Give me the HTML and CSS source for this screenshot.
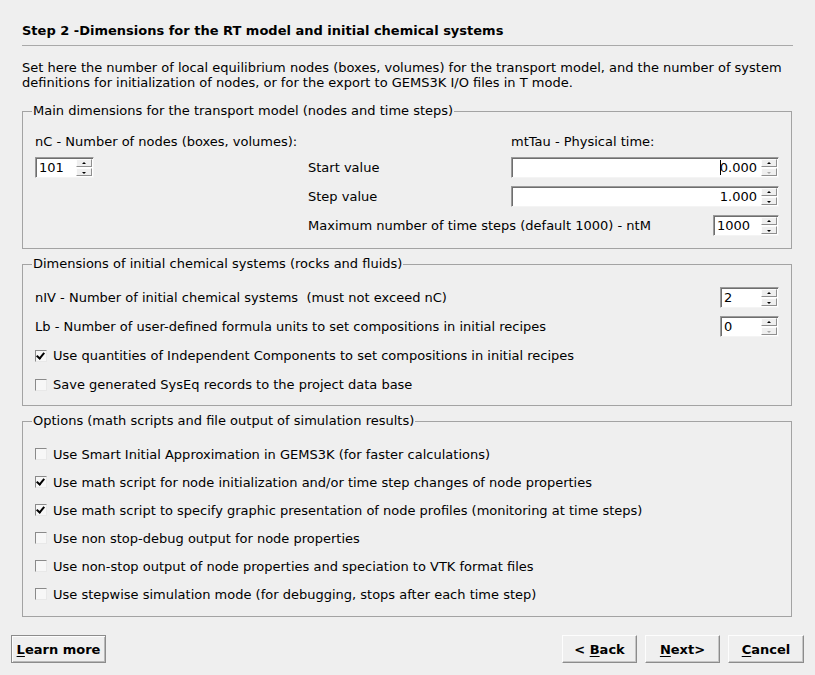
FILE: index.html
```html
<!DOCTYPE html>
<html>
<head>
<meta charset="utf-8">
<link rel="stylesheet" href="styles.css">
</head>
<body>
<div class="page">
  <div class="title">Step 2 -Dimensions for the RT model and initial chemical systems</div>
  <p class="intro">Set here the number of local equilibrium nodes (boxes, volumes) for the transport model, and the number of system<br>definitions for initialization of nodes, or for the export to GEMS3K I/O files in T mode.</p>

  <fieldset class="group g1">
    <legend>Main dimensions for the transport model (nodes and time steps)</legend>
    <div class="grid1">
      <div class="cell">nC - Number of nodes (boxes, volumes):</div>
      <div class="cell"></div>
      <div class="cell">mtTau - Physical time:</div>

      <div class="cell"><div class="spin w59"><span class="val">101</span><div class="btns"><span class="sb up"></span><span class="sb dn"></span></div></div></div>
      <div class="cell">Start value</div>
      <div class="cell"><div class="spin wide"><span class="val right"><span class="caret"></span>0.000</span><div class="btns"><span class="sb up"></span><span class="sb dn off"></span></div></div></div>

      <div class="cell"></div>
      <div class="cell">Step value</div>
      <div class="cell"><div class="spin wide"><span class="val right">1.000</span><div class="btns"><span class="sb up"></span><span class="sb dn"></span></div></div></div>

      <div class="cell"></div>
      <div class="cell span2"><span>Maximum number of time steps (default 1000) - ntM</span><div class="spin w66"><span class="val">1000</span><div class="btns"><span class="sb up"></span><span class="sb dn"></span></div></div></div>
    </div>
  </fieldset>

  <fieldset class="group g2">
    <legend>Dimensions of initial chemical systems (rocks and fluids)</legend>
    <div class="row29 between"><span>nIV - Number of initial chemical systems &nbsp;(must not exceed nC)</span><div class="spin w59"><span class="val">2</span><div class="btns"><span class="sb up"></span><span class="sb dn"></span></div></div></div>
    <div class="row29 between"><span>Lb - Number of user-defined formula units to set compositions in initial recipes</span><div class="spin w59"><span class="val">0</span><div class="btns"><span class="sb up"></span><span class="sb dn off"></span></div></div></div>
    <div class="row29"><span class="cb on"></span><span>Use quantities of Independent Components to set compositions in initial recipes</span></div>
    <div class="row29"><span class="cb"></span><span>Save generated SysEq records to the project data base</span></div>
  </fieldset>

  <fieldset class="group g3">
    <legend>Options (math scripts and file output of simulation results)</legend>
    <div class="row28"><span class="cb"></span><span>Use Smart Initial Approximation in GEMS3K (for faster calculations)</span></div>
    <div class="row28"><span class="cb on"></span><span>Use math script for node initialization and/or time step changes of node properties</span></div>
    <div class="row28"><span class="cb on"></span><span>Use math script to specify graphic presentation of node profiles (monitoring at time steps)</span></div>
    <div class="row28"><span class="cb"></span><span>Use non stop-debug output for node properties</span></div>
    <div class="row28"><span class="cb"></span><span>Use non-stop output of node properties and speciation to VTK format files</span></div>
    <div class="row28"><span class="cb"></span><span>Use stepwise simulation mode (for debugging, stops after each time step)</span></div>
  </fieldset>
</div>

<div class="buttons">
  <button class="btn learn"><u>L</u>earn more</button>
  <div class="spacer"></div>
  <button class="btn">&lt; <u>B</u>ack</button>
  <button class="btn"><u>N</u>ext&gt;</button>
  <button class="btn cancel"><u>C</u>ancel</button>
</div>
</body>
</html>
```

FILE: styles.css
```css
html, body {
  margin: 0;
  padding: 0;
}
body {
  width: 815px;
  height: 675px;
  background: #efefef;
  font-family: "DejaVu Sans", "Liberation Sans", sans-serif;
  font-size: 13px;
  color: #000;
  overflow: hidden;
}
.page {
  padding: 0 23px 0 22px;
}
.title {
  font-weight: bold;
  line-height: 16px;
  padding-top: 23px;
  padding-bottom: 6px;
  border-bottom: 1px solid #a9a9a9;
  margin-right: -1px;
}
.intro {
  margin: 14px 0 0 0;
  line-height: 15px;
}
.group {
  margin: 0;
  padding: 0 12px 0 12px;
  border: 1px solid #a3a3a3;
  min-width: 0;
}
.group legend {
  padding: 0 1px;
  margin-left: -3px;
  line-height: 16px;
}
.g1 {
  margin-top: 13px;
  padding-top: 11px;
  padding-bottom: 8px;
}
.g2 {
  margin-top: 7px;
  padding-top: 11px;
  padding-bottom: 6px;
}
.g3 {
  margin-top: 7px;
  padding-top: 11px;
  padding-bottom: 8px;
}
.grid1 {
  display: grid;
  grid-template-columns: 273px 203px 1fr;
  grid-template-rows: 23px 29px 29px 29px;
}
.cell {
  display: flex;
  align-items: center;
}
.span2 {
  grid-column: 2 / 4;
  justify-content: space-between;
}
.row29 {
  height: 29px;
  display: flex;
  align-items: center;
}
.row28 {
  height: 28px;
  display: flex;
  align-items: center;
}
.between {
  justify-content: space-between;
}

/* spin boxes */
.spin {
  box-sizing: border-box;
  height: 21px;
  background: #fff;
  border-top: 1px solid #9a9a9a;
  border-left: 1px solid #9a9a9a;
  border-right: 1px solid #f4f4f4;
  border-bottom: 1px solid #f4f4f4;
  box-shadow: inset 1px 1px 0 #6e6e6e;
  display: flex;
  align-items: center;
  padding: 0 1px 0 3px;
}
.w59 { width: 59px; }
.w66 { width: 66px; }
.wide { width: 268px; }
.val {
  flex: 1;
  line-height: 15px;
  white-space: nowrap;
}
.val.right {
  text-align: right;
  padding-right: 4px;
}
.caret {
  display: inline-block;
  width: 1px;
  height: 15px;
  background: #000;
  vertical-align: -3px;
  margin-right: -1px;
}
.btns {
  display: flex;
  flex-direction: column;
  width: 16px;
  height: 17px;
  gap: 1px;
}
.sb {
  box-sizing: border-box;
  flex: 1;
  background: #efefef;
  border-top: 1px solid #fdfdfd;
  border-left: 1px solid #fdfdfd;
  border-right: 1px solid #8f8f8f;
  border-bottom: 1px solid #8f8f8f;
  position: relative;
}
.sb::after {
  content: "";
  position: absolute;
  left: 5px;
  width: 0;
  height: 0;
  border-left: 2px solid transparent;
  border-right: 2px solid transparent;
}
.sb.up::after {
  top: 2px;
  border-bottom: 2px solid #000;
}
.sb.dn::after {
  top: 3px;
  border-top: 2px solid #000;
}
.sb.off::after {
  border-top-color: #a8a8a8;
}

/* checkboxes */
.cb {
  box-sizing: border-box;
  width: 12px;
  height: 12px;
  flex: none;
  margin: 0 6px 0 0;
  background: #f7f7f7;
  border-top: 1px solid #8a8a8a;
  border-left: 1px solid #8a8a8a;
  border-right: 1px solid #e8e8e8;
  border-bottom: 1px solid #e8e8e8;
  position: relative;
}
.cb.on::after {
  content: "";
  position: absolute;
  left: 2px;
  top: 0px;
  width: 3px;
  height: 6px;
  border-right: 2px solid #000;
  border-bottom: 2px solid #000;
  transform: rotate(40deg);
  transform-origin: 50% 50%;
}

/* buttons */
.buttons {
  display: flex;
  gap: 8px;
  padding: 0 11px 0 11px;
  margin-top: 18px;
}
.spacer {
  flex: 1;
}
.btn {
  box-sizing: border-box;
  height: 28px;
  width: 75px;
  font-family: "DejaVu Sans", "Liberation Sans", sans-serif;
  font-size: 13px;
  font-weight: bold;
  color: #000;
  background: #efefef;
  border-top: 1px solid #fdfdfd;
  border-left: 1px solid #fdfdfd;
  border-right: 1px solid #8c8c8c;
  border-bottom: 1px solid #8c8c8c;
  box-shadow: inset -1px -1px 0 #c6c6c6;
  padding: 0;
  margin: 0;
}
.btn u {
  text-underline-offset: 2px;
}
.learn {
  width: 95px;
  border: 1px solid #8c8c8c;
  box-shadow: inset 1px 1px 0 #fdfdfd, inset -1px -1px 0 #b8b8b8;
}
.cancel {
  width: 76px;
}
```
